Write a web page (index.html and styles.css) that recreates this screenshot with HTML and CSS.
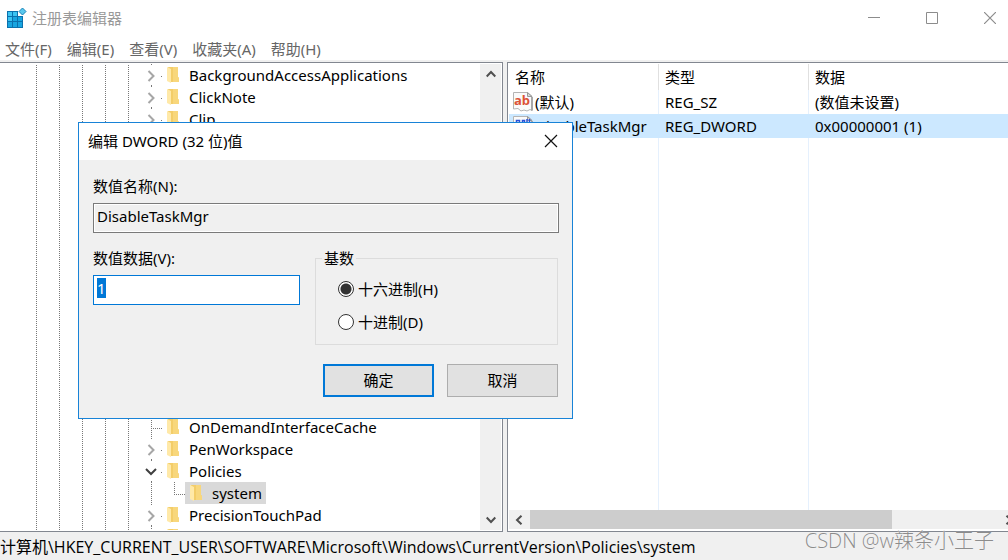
FILE: index.html
```html
<!DOCTYPE html>
<html lang="zh-CN">
<head>
<meta charset="utf-8">
<title>注册表编辑器</title>
<link rel="stylesheet" href="styles.css">
</head>
<body>
<svg class="defs" aria-hidden="true">
  <symbol id="folder" viewBox="0 0 12 16">
    <path d="M1 0h10v10l1 1v4H3z" fill="#f3cd69"/>
    <path d="M6 0h5v10l1 1v4H6z" fill="#f8d77c"/>
    <path d="M0 0l4 2v14l-4-2z" fill="#ffe9a8"/>
  </symbol>
  <symbol id="chev-right" viewBox="0 0 9 12"><path d="M1.500 1l5 5-5 5" fill="none" stroke="#a6a6a6" stroke-width="2"/></symbol>
  <symbol id="chev-down" viewBox="0 0 12 8"><path d="M1 1l5 5 5-5" fill="none" stroke="#404040" stroke-width="2"/></symbol>
  <symbol id="arrow-up" viewBox="0 0 10 8"><path d="M.7 6.500L5 2l4.300 4.500" fill="none" stroke="#505050" stroke-width="2"/></symbol>
  <symbol id="arrow-down" viewBox="0 0 10 8"><path d="M.7 1.500L5 6l4.300-4.500" fill="none" stroke="#505050" stroke-width="2"/></symbol>
  <symbol id="arrow-left" viewBox="0 0 8 10"><path d="M6.500.7L2 5l4.500 4.300" fill="none" stroke="#505050" stroke-width="2"/></symbol>
  <symbol id="arrow-right" viewBox="0 0 8 10"><path d="M1.500.7L6 5 1.500 9.300" fill="none" stroke="#505050" stroke-width="2"/></symbol>
  <symbol id="page" viewBox="0 0 20 20">
    <path d="M.5.5h14l4.500 4v14l-2-1-3 1.500-3-1-3 1-3-2.500-4.500.500z" fill="#fafafa" stroke="#b4b4b4"/>
    <path d="M14.500.5v4h4.500z" fill="#d8d8d8" stroke="#999"/>
    <path d="M19 5v13.500" stroke="#999" stroke-width="1.500"/>
  </symbol>
</svg>
<div class="window">
  <header class="titlebar">
    <svg class="app-icon" viewBox="0 0 20 20" aria-hidden="true">
      <path d="M0 3h11v5h5v12H0z" fill="#0b71ad"/>
      <path d="M1 4h4v4H1zM6 4h4v4H6zM1 9h4v4H1z" fill="#3cc4f2"/>
      <path d="M6 9h4v4H6zM11 9h4v4h-4zM1 14h4v5H1zM6 14h4v5H6zM11 14h4v5h-4z" fill="#18a5e0"/>
      <path d="M15.500 0L19 3.500 15.500 7 12 3.500z" fill="#59c8ee" stroke="#1682b8"/>
    </svg>
    <h1 class="title">注册表编辑器</h1>
    <div class="caption">
      <button aria-label="最小化"><svg width="12" height="12"><path d="M0 5.500h12" stroke="#8c8c8c"/></svg></button>
      <button aria-label="最大化"><svg width="12" height="12"><path d="M.5.5h11v11H.5z" fill="none" stroke="#8c8c8c"/></svg></button>
      <button aria-label="关闭"><svg width="12" height="12"><path d="M0 0l12 12M12 0L0 12" stroke="#8c8c8c" stroke-width="1.200"/></svg></button>
    </div>
  </header>
  <nav class="menu">
    <button>文件(F)</button><button>编辑(E)</button><button>查看(V)</button><button>收藏夹(A)</button><button>帮助(H)</button>
  </nav>
  <main class="panes">
    <section class="tree-pane">
      <ul class="tree">
        <li class="node"><button class="toggle" aria-label="展开"><svg width="9" height="12"><use href="#chev-right"/></svg></button><svg class="folder"><use href="#folder"/></svg><span>BackgroundAccessApplications</span></li>
        <li class="node"><button class="toggle" aria-label="展开"><svg width="9" height="12"><use href="#chev-right"/></svg></button><svg class="folder"><use href="#folder"/></svg><span>ClickNote</span></li>
        <li class="node"><button class="toggle" aria-label="展开"><svg width="9" height="12"><use href="#chev-right"/></svg></button><svg class="folder"><use href="#folder"/></svg><span>Clip</span></li>
        <li class="covered"></li>
        <li class="node"><i class="leaf"></i><svg class="folder"><use href="#folder"/></svg><span>OnDemandInterfaceCache</span></li>
        <li class="node"><button class="toggle" aria-label="展开"><svg width="9" height="12"><use href="#chev-right"/></svg></button><svg class="folder"><use href="#folder"/></svg><span>PenWorkspace</span></li>
        <li class="node"><button class="toggle" aria-label="折叠"><svg width="12" height="8"><use href="#chev-down"/></svg></button><svg class="folder"><use href="#folder"/></svg><span>Policies</span></li>
        <li class="node child"><i class="trunk"></i><i class="leaf last"></i><div class="selected"><svg class="folder"><use href="#folder"/></svg><span>system</span></div></li>
        <li class="node"><button class="toggle" aria-label="展开"><svg width="9" height="12"><use href="#chev-right"/></svg></button><svg class="folder"><use href="#folder"/></svg><span>PrecisionTouchPad</span></li>
        <li class="node"><i class="leaf"></i><svg class="folder"><use href="#folder"/></svg></li>
      </ul>
      <div class="vscroll">
        <button aria-label="向上滚动"><svg width="10" height="8"><use href="#arrow-up"/></svg></button>
        <button aria-label="向下滚动"><svg width="10" height="8"><use href="#arrow-down"/></svg></button>
      </div>
    </section>
    <section class="list-pane">
      <div class="list">
        <table class="values">
          <thead><tr><th class="col">名称</th><th class="col">类型</th><th>数据</th></tr></thead>
          <tbody>
            <tr><td><div class="name"><svg class="value-icon" viewBox="0 0 20 20" aria-hidden="true"><use href="#page"/><text x="1" y="13" class="glyph string">ab</text></svg>(默认)</div></td><td>REG_SZ</td><td>(数值未设置)</td></tr>
            <tr class="active"><td><div class="name"><svg class="value-icon" viewBox="0 0 20 20" aria-hidden="true"><use href="#page"/><path d="M3.500 4.500h3v5h-3zM9.500 4.500h2v5h-2zM14 3v6M16.500 3v6" fill="none" stroke="#2a50d8" stroke-width="1.500"/></svg>DisableTaskMgr</div></td><td>REG_DWORD</td><td>0x00000001 (1)</td></tr>
          </tbody>
        </table>
      </div>
      <div class="hscroll">
        <button aria-label="向左滚动"><svg width="8" height="10"><use href="#arrow-left"/></svg></button>
        <div class="thumb"></div><div class="track"></div>
        <button class="right" aria-label="向右滚动"><svg width="8" height="10"><use href="#arrow-right"/></svg></button>
      </div>
    </section>
  </main>
  <footer class="status">计算机\HKEY_CURRENT_USER\SOFTWARE\Microsoft\Windows\CurrentVersion\Policies\system</footer>
  <form class="dialog" role="dialog" aria-labelledby="dialog-title">
    <div class="dialog-bar">
      <h2 id="dialog-title">编辑 DWORD (32 位)值</h2>
      <button type="button" class="close" aria-label="关闭"><svg width="14" height="14"><path d="M1 1l12 12M13 1L1 13" stroke="#111" stroke-width="1.200"/></svg></button>
    </div>
    <div class="dialog-body">
      <div class="field wide">
        <label for="value-name">数值名称(N):</label>
        <input id="value-name" class="readonly" value="DisableTaskMgr" readonly>
      </div>
      <div class="field">
        <label for="value-data">数值数据(V):</label>
        <input id="value-data" value="1" autocomplete="off">
      </div>
      <fieldset class="base">
        <legend>基数</legend>
        <label><input type="radio" name="base" checked>十六进制(H)</label>
        <label><input type="radio" name="base">十进制(D)</label>
      </fieldset>
      <div class="actions">
        <button type="button" class="primary">确定</button>
        <button type="button">取消</button>
      </div>
    </div>
  </form>
  <div class="watermark">CSDN @w辣条小王子</div>
</div>
<script src="main.js"></script>
</body>
</html>
```
FILE: styles.css
```css
* { box-sizing: border-box; }
body, h1, h2, ul { margin: 0; padding: 0; }
body, button, input {
  font-family: "Noto Sans", "Noto Sans CJK SC", sans-serif;
  font-size: 15px;
  line-height: 20px;
  color: #000;
}
h1, h2 { font-size: 15px; font-weight: 400; }
button { border: 0; padding: 0; background: none; }
svg { display: block; flex: none; }
.defs { position: absolute; width: 0; height: 0; }

.window {
  position: relative;
  display: flex;
  flex-direction: column;
  height: 100vh;
  overflow: hidden;
  background: #fff;
}

.titlebar { display: flex; align-items: center; height: 36px; padding-left: 7px; }
.app-icon { width: 20px; height: 20px; }
.title { margin-left: 5px; color: #999; }
.caption { display: flex; margin-left: auto; height: 36px; }
.caption button { display: grid; place-items: center; width: 58px; }
.caption button:last-child { margin-right: -11px; }

.menu { display: flex; gap: 15px; height: 26px; padding: 2px 0 0 5px; border-bottom: 2px solid #f0f0f0; }
.menu button { color: #666; white-space: nowrap; }

.panes { display: flex; flex: 1; min-height: 0; gap: 4px; background: #f0f0f0; }
.tree-pane {
  display: flex;
  width: 503px;
  padding: 1px 1px 1px 0;
  border: solid #828790;
  border-width: 1px 1px 1px 0;
  background: #fff;
}
.tree {
  flex: 1;
  list-style: none;
  overflow: hidden;
  padding: 0 0 0 140px;
  background: repeating-linear-gradient(#fff 0 1px, transparent 1px 2px),
    linear-gradient(#777, #777) 36px 0 / 1px 100% no-repeat,
    linear-gradient(#777, #777) 59px 0 / 1px 100% no-repeat,
    linear-gradient(#777, #777) 82px 0 / 1px 100% no-repeat,
    linear-gradient(#777, #777) 105px 0 / 1px 100% no-repeat,
    linear-gradient(#777, #777) 128px 0 / 1px 100% no-repeat;
}
.node { display: flex; align-items: center; height: 22px; white-space: nowrap; }
.covered { height: 286px; }
.toggle {
  display: grid;
  place-items: center;
  width: 23px;
  height: 22px;
  margin-right: 4px;
  padding: 2px 1px 0 0;
  background:
    linear-gradient(#777, #777) 11px 0 / 1px 1px no-repeat,
    linear-gradient(#777, #777) 11px 21px / 1px 1px no-repeat,
    repeating-linear-gradient(90deg, #777 0 1px, transparent 1px 2px) 21px 12px / 3px 1px no-repeat;
}
.trunk, .leaf { width: 23px; height: 22px; background: repeating-linear-gradient(#777 0 1px, transparent 1px 2px) 11px 0 / 1px 22px no-repeat; }
.leaf {
  margin-right: 4px;
  background:
    repeating-linear-gradient(#777 0 1px, transparent 1px 2px) 11px 0 / 1px 22px no-repeat,
    repeating-linear-gradient(90deg, #777 0 1px, transparent 1px 2px) 11px 12px / 12px 1px no-repeat;
}
.leaf.last {
  margin-right: 0;
  width: 22px;
  background:
    repeating-linear-gradient(#777 0 1px, transparent 1px 2px) 11px 0 / 1px 13px no-repeat,
    repeating-linear-gradient(90deg, #777 0 1px, transparent 1px 2px) 11px 12px / 11px 1px no-repeat;
}
.folder { width: 12px; height: 16px; margin-right: 10px; }
.selected { display: flex; align-items: center; height: 22px; padding: 0 4px 0 5px; background: #d9d9d9; }
.vscroll { display: flex; flex-direction: column; justify-content: space-between; width: 21px; background: #f0f0f0; }
.vscroll button { display: grid; place-items: center; height: 20px; }

.list-pane {
  display: flex;
  flex: 1;
  flex-direction: column;
  min-width: 0;
  padding: 1px 0 2px 1px;
  border: solid #828790;
  border-width: 1px 0 1px 1px;
  background: #fff;
}
.list {
  flex: 1;
  min-height: 0;
  background:
    linear-gradient(#e5f0fd, #e5f0fd) 149px 0 / 1px 100% no-repeat,
    linear-gradient(#e5f0fd, #e5f0fd) 299px 0 / 1px 100% no-repeat;
}
.values { width: 100%; border-collapse: collapse; table-layout: fixed; }
.values th, .values td { padding: 0 0 0 6px; text-align: left; font-weight: 400; white-space: nowrap; height: 24px; }
.values th { height: 26px; }
.values .col { width: 150px; box-shadow: inset -1px 0 #e0e0e0; }
.values .active { background: #cce8ff; }
.name { display: flex; align-items: center; gap: 2px; }
.values td:first-child { padding-left: 4px; }
.value-icon { width: 20px; height: 20px; }
.glyph { font: 700 13px "Open Sans", sans-serif; }
.string { fill: #dc5236; }
.hscroll { display: flex; height: 19px; background: #f0f0f0; overflow: hidden; }
.hscroll button { display: grid; place-items: center; flex: none; width: 21px; padding-right: 2px; }
.hscroll .right { margin-right: -12px; }
.thumb { flex: 362; background: #cdcdcd; }
.track { flex: 107; }

.status {
  height: 28px;
  padding-top: 5px;
  background: #f0f0f0;
  font-family: "Open Sans", "Noto Sans CJK SC", sans-serif;
  font-size: 16px;
  white-space: nowrap;
}

.dialog {
  position: absolute;
  left: 78px;
  top: 122px;
  width: 495px;
  border: 1px solid #1883d7;
  background: #f0f0f0;
}
.dialog-bar { display: flex; align-items: center; justify-content: space-between; height: 37px; padding: 0 14px 1px 9px; background: #fff; }
.dialog-body { display: grid; grid-template-columns: 207px 1fr; gap: 15px; padding: 16px 13px 21px 14px; }
.field { display: flex; flex-direction: column; gap: 7px; }
.wide, .actions { grid-column: 1 / -1; }
.field input { width: 100%; height: 30px; padding: 0 3px 4px; border: 1px solid #0078d7; border-radius: 0; outline: 0; background: #fff; }
.field .readonly { border-color: #7a7a7a; background: #f0f0f0; box-shadow: inset 0 0 0 1px #fff; }
.field input::selection { background: #0078d7; color: #fff; }
.base { display: flex; flex-direction: column; gap: 13px; min-width: 0; height: 97px; margin: 0 1px 0 0; padding: 11px 22px; border: 1px solid #dcdcdc; }
.base legend { margin-left: -16px; padding: 0 2px; }
.base label { display: flex; align-items: center; gap: 4px; }
.base input {
  appearance: none;
  width: 16px;
  height: 16px;
  margin: 0;
  border: 1px solid #333;
  border-radius: 50%;
  background: #fff;
}
.base input:checked { background: radial-gradient(circle, #333 0 5px, #fff 6px); }
.actions { display: flex; justify-content: flex-end; gap: 13px; padding: 4px 1px 0 0; }
.actions button { width: 111px; height: 33px; padding-bottom: 2px; border: 1px solid #adadad; background: #e1e1e1; }
.actions .primary { border: 2px solid #0078d7; }

.watermark {
  position: absolute;
  right: 14px;
  bottom: 5px;
  font-family: "Open Sans", "Noto Sans CJK SC", sans-serif;
  font-size: 20px;
  line-height: 28px;
  font-weight: 300;
  color: #8c8c8c;
  text-shadow: 0 0 1px #fff;
}
```
FILE: main.js
```js
const field = document.getElementById("value-data");
field.focus();
field.select();
```
